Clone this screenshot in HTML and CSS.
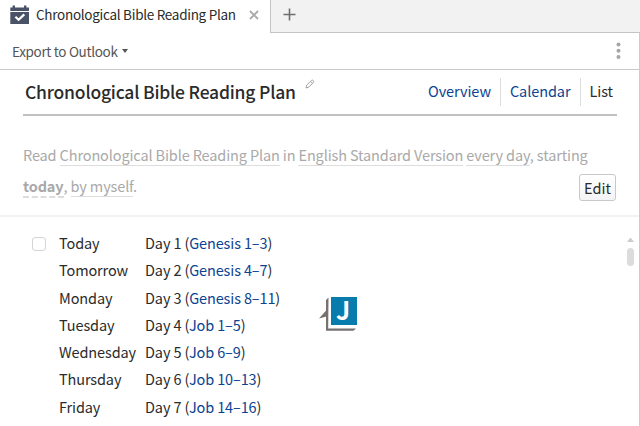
FILE: index.html
```html
<!DOCTYPE html>
<html lang="en">

<head>
  <meta charset="UTF-8">
  <meta name="viewport" content="width=device-width, initial-scale=1.0">
  <title>Chronological Bible Reading Plan</title>
  <link rel="stylesheet" href="styles.css">
</head>

<body>
  <div class="tabs">
    <div class="tab">
      <svg class="tab-icon" width="20" height="20" viewBox="0 0 20 20">
        <path d="M0.3 2.5H2.6V0.4H5V2.5H14V0.4H16.4V2.5H19V6H0.3Z" fill="#4a5268"/>
        <path d="M0.3 7H19V19H0.3Z" fill="#4a5268"/>
        <path d="M5.4 11.8L8.6 14.8L14.3 9.4" fill="none" stroke="#fff" stroke-width="2.2"/>
      </svg>
      <span class="tab-title">Chronological Bible Reading Plan</span>
      <svg class="close" width="10" height="10" viewBox="0 0 10 10"><path d="M1 1L9 9M9 1L1 9" stroke="#a9a9a9" stroke-width="1.9"/></svg>
    </div>
    <div class="tab-rest">
      <svg width="13" height="13" viewBox="0 0 13 13"><path d="M6.5 0.5V12.5M0.5 6.5H12.5" stroke="#6e6e6e" stroke-width="1.6"/></svg>
    </div>
  </div>

  <div class="panel">
    <div class="toolbar">
      <span class="export">Export to Outlook</span>
      <span class="caret"></span>
      <svg class="more" width="5" height="18" viewBox="0 0 5 18" fill="#a6a6a6"><circle cx="2.5" cy="2.5" r="2"/><circle cx="2.5" cy="8.8" r="2"/><circle cx="2.5" cy="15" r="2"/></svg>
    </div>

    <div class="plan">
      <div class="plan-header">
        <h1>Chronological Bible Reading Plan</h1>
        <svg class="pencil" width="10" height="10" viewBox="0 0 10 10"><path d="M1 9L1.7 6.2L6.5 1.4Q7.3 .7 8.2 1.5Q9.1 2.4 8.4 3.3L3.7 8.2ZM5.6 2.4L7.5 4.3" fill="none" stroke="#a0a0a0"/></svg>
        <div class="views">
          <a>Overview</a>
          <a>Calendar</a>
          <a class="active">List</a>
        </div>
      </div>
      <div class="summary">
        <p>Read <span class="opt">Chronological Bible Reading Plan</span> in <span class="opt">English Standard Version</span> <span class="opt">every day</span>, starting<br><b class="opt dashed">today</b>, <span class="opt">by myself</span>.</p>
        <button>Edit</button>
      </div>
    </div>

    <div class="list">
      <div class="days">
        <div class="day"><span class="check"></span><span class="when">Today</span><span class="reading">Day 1 (<a>Genesis 1–3</a>)</span></div>
        <div class="day"><span class="when">Tomorrow</span><span class="reading">Day 2 (<a>Genesis 4–7</a>)</span></div>
        <div class="day"><span class="when">Monday</span><span class="reading">Day 3 (<a>Genesis 8–11</a>)</span></div>
        <div class="day"><span class="when">Tuesday</span><span class="reading">Day 4 (<a>Job 1–5</a>)</span></div>
        <div class="day"><span class="when">Wednesday</span><span class="reading">Day 5 (<a>Job 6–9</a>)</span></div>
        <div class="day"><span class="when">Thursday</span><span class="reading">Day 6 (<a>Job 10–13</a>)</span></div>
        <div class="day"><span class="when">Friday</span><span class="reading">Day 7 (<a>Job 14–16</a>)</span></div>
      </div>
      <div class="scroll">
        <span class="arrow"></span>
        <span class="thumb"></span>
      </div>
      <div class="marker">
        <svg width="38" height="35" viewBox="0 0 38 35">
          <path d="M9.5 0.5L7 3V33.8H34.5L37 31.5H9.2Z" fill="#757171"/>
          <path d="M0 21.5L7.5 13V19.5Z" fill="#757171"/>
        </svg>
        <span class="letter">J</span>
      </div>
    </div>
  </div>
</body>

</html>
```
FILE: styles.css
```css
* {
  box-sizing: border-box;
}

body {
  margin: 0;
  height: 426px;
  overflow: hidden;
  display: flex;
  flex-direction: column;
  background: #fff;
  color: #2b2b2b;
  font-family: "Noto Sans CJK SC", "Open Sans", sans-serif;
  font-size: 14.5px;
}

.tabs {
  display: flex;
  height: 33px;
}

.tab {
  display: flex;
  width: 270px;
  padding-left: 10px;
}

.tab-icon {
  margin: 5px 6px 0 0;
}

.tab-title {
  width: 213px;
  line-height: 29px;
  white-space: nowrap;
  font-size: 13.5px;
  letter-spacing: -0.28px;
}

.close {
  margin-top: 10px;
}

.tab-rest {
  flex: 1;
  padding: 8px 0 0 12px;
  background: #f2f2f2;
  border-left: 1px solid #c4c4c4;
  border-bottom: 1px solid #c4c4c4;
}

.tab-rest svg {
  display: block;
}

.panel {
  flex: 1;
  border-right: 1px solid #ccc;
}

.toolbar {
  display: flex;
  align-items: center;
  height: 37px;
  padding: 0 18px 0 12px;
  border-bottom: 1px solid #c8c8c8;
}

.export {
  color: #555;
  font-size: 13.5px;
  letter-spacing: -0.33px;
}

.caret {
  margin-left: 4px;
  border: 3.5px solid transparent;
  border-top: 4px solid #555;
  border-bottom: 0;
}

.more {
  margin-left: auto;
}

.plan {
  height: 147px;
  padding: 0 22px 0 23px;
  border-bottom: 2px solid #f2f2f2;
}

.plan-header {
  display: flex;
  height: 46px;
  border-bottom: 2px solid #c0c0c0;
}

h1 {
  margin: 0 9px 0 2px;
  line-height: 43px;
  font-size: 17.5px;
  font-weight: 500;
  letter-spacing: -0.2px;
  white-space: nowrap;
}

.pencil {
  margin-top: 9px;
}

.views {
  display: flex;
  height: 28px;
  margin: 8px 4px 0 auto;
  line-height: 25px;
  letter-spacing: -0.08px;
}

.views a {
  padding-right: 9px;
  margin-right: 9px;
  border-right: 1px solid #ddd;
}

.views .active {
  color: #2b2b2b;
  padding: 0;
  margin: 0;
  border: 0;
}

a {
  color: #0b4391;
}

.summary {
  display: flex;
  justify-content: space-between;
  padding-top: 23px;
  color: #a9a9a9;
}

.summary p {
  margin: 0;
  line-height: 31px;
  letter-spacing: -0.13px;
  white-space: nowrap;
}

.opt {
  border-bottom: 1px solid #ddd;
}

.dashed {
  border-bottom: 2px dashed #ddd;
}

button {
  width: 37px;
  height: 27px;
  margin: 35px 1px 0 -38px;
  padding: 0;
  font: inherit;
  line-height: 24px;
  color: #2b2b2b;
  background: linear-gradient(#fff, #f4f4f4);
  border: 1px solid #c8c8c8;
  border-radius: 3px;
}

.list {
  position: relative;
  display: flex;
  justify-content: space-between;
  padding: 12px 5px 0 31px;
}

.day {
  display: grid;
  grid-template-columns: 28px 86px auto;
  height: 27.3px;
  line-height: 27px;
  letter-spacing: -0.13px;
  white-space: nowrap;
}

.check {
  width: 14px;
  height: 14px;
  margin: 8px 0 0 1px;
  border: 1px solid #d4d4d4;
  border-radius: 3px;
}

.when {
  grid-column: 2;
}

.scroll {
  display: flex;
  flex-direction: column;
  gap: 6px;
  padding-top: 9px;
}

.arrow {
  border: 3.5px solid transparent;
  border-top: 0;
  border-bottom: 4px solid #ccc;
}

.thumb {
  width: 7px;
  height: 18px;
  border-radius: 3.5px;
  background: #dcdcdc;
}

/* note flag that floats over the list */
.marker {
  position: absolute;
  left: 319px;
  top: 80px;
}

.marker svg {
  display: block;
}

.letter {
  position: absolute;
  left: 12px;
  top: 0;
  width: 26px;
  height: 28px;
  padding-right: 2px;
  background: #087cac;
  color: #fff;
  font-size: 25px;
  font-weight: 700;
  line-height: 25px;
  text-align: center;
}
```
